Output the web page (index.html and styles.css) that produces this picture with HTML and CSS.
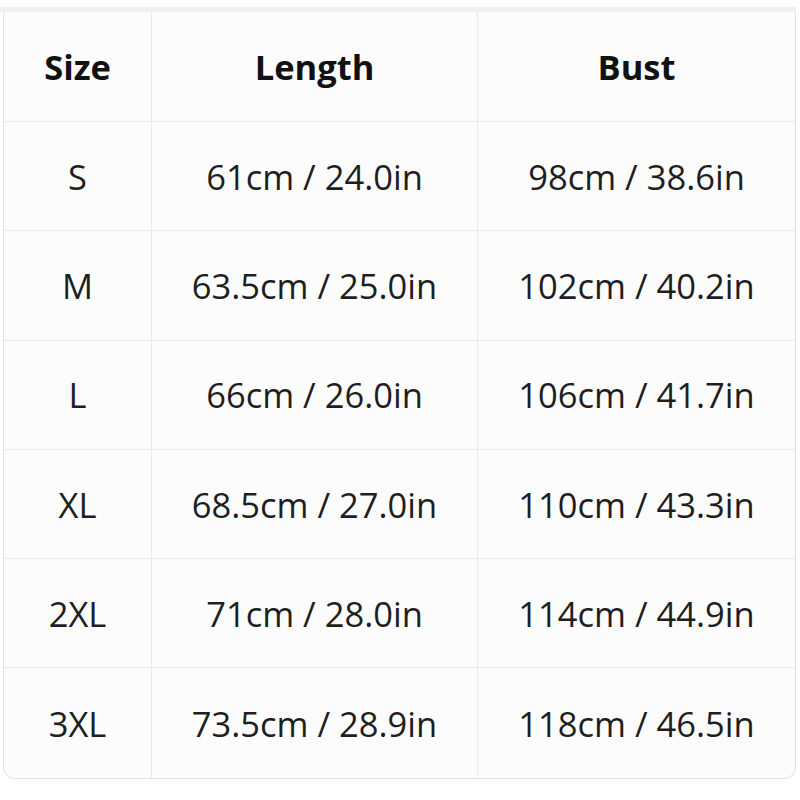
FILE: index.html
```html
<!DOCTYPE html>
<html>
<head>
<meta charset="utf-8">
<link rel="stylesheet" href="styles.css">
</head>
<body>
<div class="wrap">
  <div class="band"></div>
  <div class="card">
    <div class="grid">
      <div class="cell head">Size</div>
      <div class="cell head">Length</div>
      <div class="cell head last">Bust</div>

      <div class="cell">S</div>
      <div class="cell">61cm / 24.0in</div>
      <div class="cell last">98cm / 38.6in</div>

      <div class="cell">M</div>
      <div class="cell">63.5cm / 25.0in</div>
      <div class="cell last">102cm / 40.2in</div>

      <div class="cell">L</div>
      <div class="cell">66cm / 26.0in</div>
      <div class="cell last">106cm / 41.7in</div>

      <div class="cell">XL</div>
      <div class="cell">68.5cm / 27.0in</div>
      <div class="cell last">110cm / 43.3in</div>

      <div class="cell">2XL</div>
      <div class="cell">71cm / 28.0in</div>
      <div class="cell last">114cm / 44.9in</div>

      <div class="cell bottom">3XL</div>
      <div class="cell bottom">73.5cm / 28.9in</div>
      <div class="cell bottom last">118cm / 46.5in</div>
    </div>
  </div>
</div>
</body>
</html>
```

FILE: styles.css
```css
html, body {
  margin: 0;
  padding: 0;
  background: #ffffff;
}
.wrap {
  padding-top: 7px;
  width: 796px;
}
.band {
  height: 5px;
  background: #f0f0f0;
  width: 796px;
}
.card {
  margin-left: 3px;
  width: 791px;
  border: 1px solid #e4e4e4;
  border-top: none;
  border-radius: 0 0 12px 12px;
  background: #fcfcfc;
  overflow: hidden;
}
.grid {
  display: grid;
  grid-template-columns: 148px 326px 1fr;
  grid-template-rows: 110px repeat(6, 109.3px);
}
.cell {
  display: flex;
  align-items: center;
  justify-content: center;
  font-family: "Open Sans", "Noto Sans", sans-serif;
  font-size: 34.5px;
  color: #1e1e1e;
  border-right: 1px solid #e9e9e9;
  border-bottom: 1px solid #e9e9e9;
}
.cell.last {
  border-right: none;
}
.cell.bottom {
  border-bottom: none;
}
.cell.head {
  font-weight: 700;
  color: #111;
}
```
